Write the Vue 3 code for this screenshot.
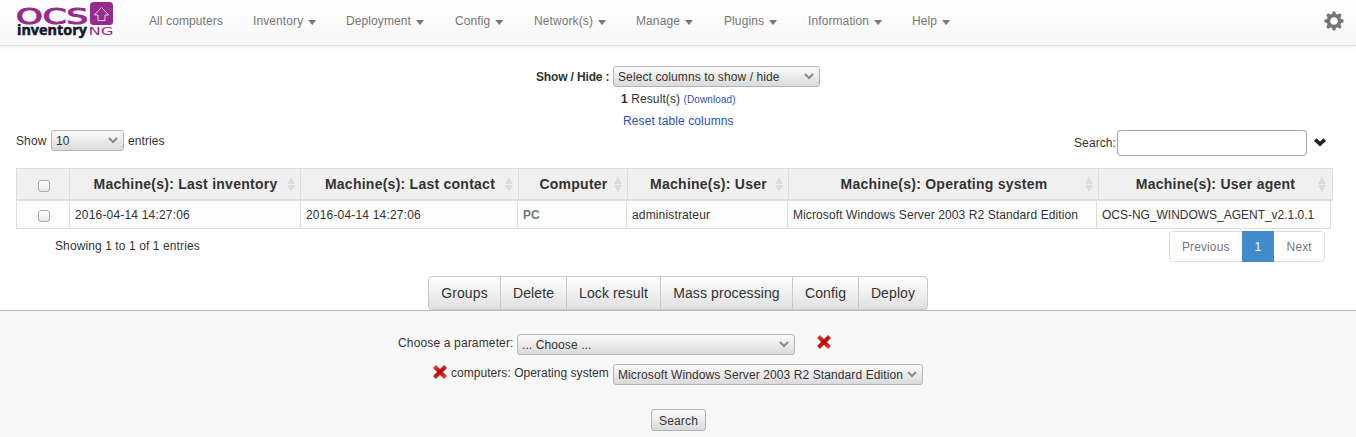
<script setup>
const menus = ['All computers', 'Inventory', 'Deployment', 'Config', 'Network(s)', 'Manage', 'Plugins', 'Information', 'Help']
const columns = [
  'Machine(s): Last inventory',
  'Machine(s): Last contact',
  'Computer',
  'Machine(s): User',
  'Machine(s): Operating system',
  'Machine(s): User agent'
]
const cells = [
  { text: '2016-04-14 14:27:06', cls: 'date' },
  { text: '2016-04-14 14:27:06', cls: 'date' },
  { text: 'PC', cls: 'pc' },
  { text: 'administrateur', cls: 'user' },
  { text: 'Microsoft Windows Server 2003 R2 Standard Edition', cls: 'os' },
  { text: 'OCS-NG_WINDOWS_AGENT_v2.1.0.1', cls: 'agent' }
]
const actions = ['Groups', 'Delete', 'Lock result', 'Mass processing', 'Config', 'Deploy']
</script>

<template>
  <div class="page">
    <header class="navbar">
      <svg class="logo" width="98" height="40" viewBox="0 0 98 40">
        <text class="ocs" x="-1" y="22.500" textLength="72" lengthAdjust="spacingAndGlyphs">OCS</text>
        <rect x="73" y="1" width="23" height="23" rx="3.5" fill="#952b8f" />
        <path d="M84.5 6.5l7.2 7.500h-3.700v5.500h-7v-5.500h-3.700z" fill="none" stroke="#ecd0ea" stroke-width="1" />
        <text class="inv" x="0" y="34" textLength="70" lengthAdjust="spacingAndGlyphs">inventory</text>
        <text class="ng" x="71.500" y="34" textLength="25" lengthAdjust="spacingAndGlyphs">NG</text>
      </svg>
      <nav class="menu">
        <a v-for="(m, i) in menus" :key="m"><span>{{ m }}</span><i v-if="i" class="caret"></i></a>
      </nav>
      <svg class="gear" width="20" height="20" viewBox="-10 -10 20 20">
        <g fill="#777">
          <path v-for="a in 8" :key="a" :transform="`rotate(${a * 45})`" d="M-2.4-6L-1.2-9.6H1.2L2.4-6z" />
        </g>
        <circle r="5.5" fill="none" stroke="#777" stroke-width="3.4" />
      </svg>
    </header>

    <section class="summary">
      <div class="show-hide">
        <b>Show / Hide :</b>
        <div class="select cols"><span>Select columns to show / hide</span>
          <svg width="10" height="7" viewBox="0 0 10 7"><path d="M1 1l4 4 4-4" /></svg></div>
      </div>
      <div class="results"><b>1</b> Result(s) <a>(Download)</a></div>
      <div class="reset"><a>Reset table columns</a></div>
    </section>

    <section class="controls">
      <div class="length"><span>Show</span>
        <div class="select ten"><span>10</span>
          <svg width="10" height="7" viewBox="0 0 10 7"><path d="M1 1l4 4 4-4" /></svg></div>
        <span>entries</span></div>
      <div class="filter"><span>Search:</span><div class="input"></div>
        <svg width="12" height="9" viewBox="0 0 12 9"><path d="M1.300 1.700L6 6l4.700-4.300" fill="none" stroke="#222" stroke-width="3.6" /></svg>
      </div>
    </section>

    <section class="table">
      <div class="thead">
        <div class="check"><i></i></div>
        <div v-for="c in columns" :key="c" class="th"><span>{{ c }}</span>
          <svg width="8" height="15" viewBox="0 0 8 15"><path d="M4 0l4 7H0zM4 15l4-7H0z" fill="#dcdcdc" /></svg></div>
      </div>
      <div class="tbody">
        <div class="check"><i></i></div>
        <div v-for="(c, i) in cells" :key="i" class="td"><span :class="c.cls">{{ c.text }}</span></div>
      </div>
    </section>

    <section class="footer">
      <span class="info">Showing 1 to 1 of 1 entries</span>
      <div class="pages"><a>Previous</a><a class="active">1</a><a>Next</a></div>
    </section>

    <section class="actions"><button v-for="a in actions" :key="a">{{ a }}</button></section>

    <section class="form">
      <div class="row first">
        <span class="label1">Choose a parameter:</span>
        <div class="select param"><span>... Choose ...</span>
          <svg width="10" height="7" viewBox="0 0 10 7"><path d="M1 1l4 4 4-4" /></svg></div>
        <svg class="cross" width="16" height="16" viewBox="0 0 16 16"><path d="M2.500 2.500l11 11M13.500 2.500l-11 11" stroke="url(#red)" /></svg>
      </div>
      <div class="row second">
        <svg class="cross" width="16" height="16" viewBox="0 0 16 16">
          <defs><linearGradient id="red" gradientUnits="userSpaceOnUse" x1="5" y1="0" x2="11" y2="16">
            <stop offset="0" stop-color="#d85050" /><stop offset=".48" stop-color="#b80808" /><stop offset="1" stop-color="#f54040" />
          </linearGradient></defs>
          <path d="M2.500 2.500l11 11M13.500 2.500l-11 11" stroke="url(#red)" /></svg>
        <span class="label2">computers: Operating system</span>
        <div class="select osys"><span class="os">Microsoft Windows Server 2003 R2 Standard Edition</span>
          <svg width="10" height="7" viewBox="0 0 10 7"><path d="M1 1l4 4 4-4" /></svg></div>
      </div>
      <button class="search">Search</button>
    </section>
  </div>
</template>

<style>
body { margin: 0; background: #fff; overflow: hidden; }
</style>

<style scoped>
* { box-sizing: border-box; }
.page { width: 1356px; height: 437px; overflow: hidden; display: flex; flex-direction: column; font: 12px/20px "Liberation Sans", Arial, sans-serif; color: #333; letter-spacing: .1px; white-space: nowrap; }
.page > * { flex: none; }
a { color: #2c4fcb; text-decoration: none; }

.navbar { height: 46px; display: flex; padding-left: 17px; border-bottom: 1px solid #e2e2e2; background: linear-gradient(#fff, #f7f7f7); box-shadow: 0 1px 5px rgba(0,0,0,.075); }
.logo { margin-top: 1px; flex: none; letter-spacing: 0; overflow: visible; }
.ocs { font: 20.5px "DejaVu Sans", sans-serif; fill: #952b8f; stroke: #952b8f; stroke-width: 1px; }
.inv { font: bold 13.5px "Open Sans", sans-serif; fill: #15152b; stroke: #15152b; stroke-width: .5px; }
.ng { font: 10.5px "DejaVu Sans", sans-serif; fill: #952b8f; }
.menu { display: grid; grid-template-columns: 104px 93px 109px 79px 102px 88px 84px 104px 60px; margin-left: 34px; padding-top: 11px; }
.menu a { color: #777; display: flex; }
.caret { width: 8px; height: 5px; margin: 9px 0 0 5px; background: #777; clip-path: polygon(0 0, 100% 0, 50% 100%); }
.gear { margin: 11px 12px 0 auto; }

.select { height: 21px; display: flex; align-items: center; justify-content: space-between; padding: 0 5px 0 4px; border: 1px solid #b5b5b5; border-radius: 3px; background: linear-gradient(#fbfbfb, #dadada); line-height: 19px; }
.select span { padding-top: 2px; }
.select svg { fill: none; stroke: #888; stroke-width: 2; flex: none; }

.summary { height: 84px; padding-top: 20px; }
.show-hide { display: flex; padding-left: 536px; height: 23px; }
.show-hide b { width: 77px; line-height: 22px; letter-spacing: -.15px; }
.cols { width: 207px; }
.results { padding-left: 621px; }
.results a { font-size: 10px; }
.reset { padding: 1px 0 0 623px; }

.controls { display: flex; justify-content: space-between; height: 38px; padding: 0 30px 0 16px; }
.length { display: flex; line-height: 23px; }
.length > span:first-child { width: 35px; }
.ten { width: 73px; margin-right: 4px; }
.filter { display: flex; line-height: 27px; }
.filter > span { width: 43px; }
.input { width: 190px; height: 26px; border: 1px solid #aaa; border-radius: 4px; box-shadow: 0 0 1px #bbb; background: #fff; }
.filter svg { margin: 8px 0 0 7px; }

.table { padding-left: 16px; height: 61px; }
.thead { width: 1317px; height: 33px; display: grid; grid-template-columns: 53px 231px 218px 109px 161px 310px 1fr; background: #f0f0f0; border: 1px solid #ddd; border-bottom-width: 2px; }
.th { display: flex; align-items: center; border-left: 1px solid #ddd; font-size: 14px; font-weight: bold; padding-right: 6px; margin-left: -1px; letter-spacing: .25px; }
.th span { flex: 1; text-align: center; padding-left: 14px; }
.check { display: flex; align-items: center; justify-content: center; }
.check i { width: 12px; height: 12px; border: 1px solid #aaa; border-radius: 3px; background: linear-gradient(#fff, #e8e8e8); margin-top: 4px; margin-left: 1px; }
.tbody .check i { margin-top: 2px; }
.tbody { width: 1315px; height: 28px; display: grid; grid-template-columns: 53px 231px 217px 109px 161px 309px 1fr; background: #fcfcfc; border: 1px solid #ddd; border-top: 0; }
.td { border-left: 1px solid #ddd; margin-left: -1px; padding: 4px 0 0 5px; }
.date { letter-spacing: .18px; }
.user { letter-spacing: .15px; }
.agent { letter-spacing: -.02px; }
.pc { font-weight: bold; color: #777; }

.footer { height: 47px; display: flex; justify-content: space-between; padding: 2px 31px 0 55px; }
.info { margin-top: 5px; }
.pages { display: flex; width: 156px; height: 31px; border: 1px solid #ddd; border-radius: 4px; line-height: 30px; }
.pages a { width: 50px; text-align: center; color: #777; }
.pages a:first-child { width: 72px; }
.pages .active { width: 33px; margin: -1px 0; background: #428bca; color: #fff; line-height: 32px; }

.actions { display: grid; grid-template-columns: 72px 66px 94px 132px 66px 68px; width: 500px; height: 34px; margin-left: 428px; border: 1px solid #c8c8c8; border-radius: 4px; background: linear-gradient(#fff, #e0e0e0); }
.actions button { font: 14px/31px "Liberation Sans", Arial, sans-serif; letter-spacing: .1px; color: #333; border: 0; border-right: 1px solid #c8c8c8; background: none; padding: 0; }
.actions button:last-child { border-right: 0; }

.form { border-top: 1px solid #bbb; background: #f8f8f8; flex: 1 0 127px !important; padding-top: 23px; }
.row { display: flex; height: 30px; }
.cross { flex: none; }
.cross path { stroke-width: 4; fill: none; }
.first { padding-left: 398px; }
.label1 { width: 119px; line-height: 19px; letter-spacing: .15px; }
.param { width: 278px; }
.first .cross { margin-left: 21px; }
.second { padding-left: 432px; }
.label2 { width: 162px; margin-left: 3px; line-height: 19px; letter-spacing: .04px; }
.osys { width: 310px; }
.search { display: block; width: 55px; height: 22px; margin: 15px 0 0 651px; padding: 1px 0 0; border: 1px solid #b2b2b2; border-radius: 3px; background: linear-gradient(#fcfcfc, #dadada); font: 12px/20px "Liberation Sans", Arial, sans-serif; letter-spacing: .15px; color: #333; }
</style>
